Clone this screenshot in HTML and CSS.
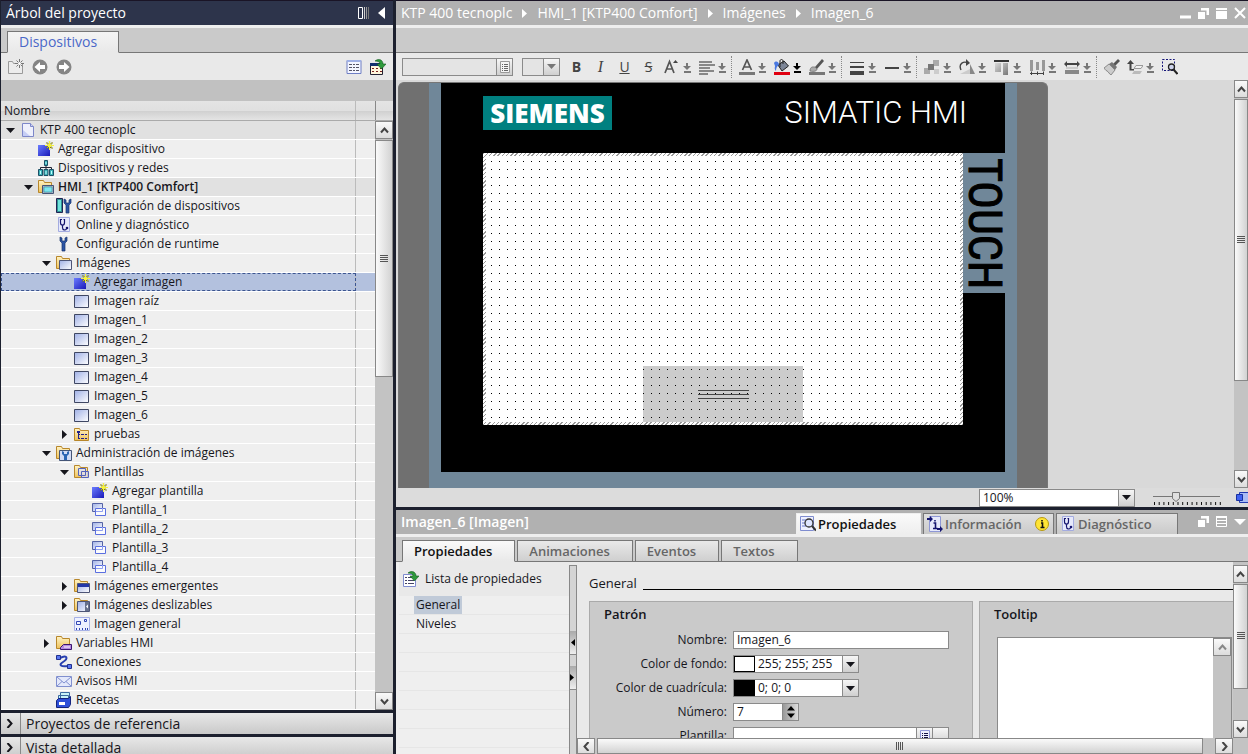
FILE: index.html
```html
<!DOCTYPE html>
<html lang="es">
<head>
<meta charset="utf-8">
<title>KTP 400 tecnoplc</title>
<link rel="stylesheet" href="styles.css">
</head>
<body>
<svg class="defs" aria-hidden="true">
  <defs>
    <linearGradient id="g-sky" x1="0" y1="0" x2="1" y2="1"><stop offset="0" stop-color="#9fb0e6"/><stop offset="1" stop-color="#fff"/></linearGradient>
    <linearGradient id="g-blue" x1="0" y1="0" x2="1" y2="1"><stop offset="0" stop-color="#6a7cff"/><stop offset="1" stop-color="#1a1ab8"/></linearGradient>
    <linearGradient id="g-gold" x1="0" y1="0" x2="0" y2="1"><stop offset="0" stop-color="#fff3c4"/><stop offset="1" stop-color="#eec25c"/></linearGradient>
    <linearGradient id="g-grey" x1="0" y1="0" x2="1" y2="1"><stop offset="0" stop-color="#d8d8d8"/><stop offset="1" stop-color="#777"/></linearGradient>
    <symbol id="i-project" viewBox="0 0 16 16"><path d="M2.500 1.500h8l3 3v10h-11z" fill="#eef0fc" stroke="#7d87c9"/><path d="M10.500 1.500v3h3" fill="#cdd3f5" stroke="#7d87c9"/><path d="M3 14V8l7 6z" fill="#c5cdf5"/></symbol>
    <symbol id="i-add" viewBox="0 0 16 16"><path d="M0 4h12v11H0z" fill="url(#g-blue)"/><path d="M11.500 0v9M7 4.500h9M8.500 1.500l6 6M14.500 1.500l-6 6" stroke="#77771c" stroke-width="1.200"/><path d="M11.500 0v9M7 4.500h9" stroke="#f6f23c"/><path d="M9.500 2.500l4 4M13.500 2.500l-4 4" stroke="#f6f23c"/></symbol>
    <symbol id="i-net" viewBox="0 0 16 16"><path d="M8 5v5M2.500 10V7.500h11V10" fill="none" stroke="#223"/><path d="M6.500.500h3v5h-3zM.500 9.500h4v6h-4zM6 9.500h4v6H6zM11.500 9.500h4v6h-4z" fill="#3fb3b8" stroke="#1c4f66"/><path d="M2 11h1v3H2zM7.500 11h1v3h-1zM13 11h1v3h-1zM7.500 2h1v2h-1z" fill="#bff"/></symbol>
    <symbol id="i-folder" viewBox="0 0 16 16"><path d="M.500 13.500v-12h5l1 2h7v10z" fill="url(#g-gold)" stroke="#b8872b"/></symbol>
    <symbol id="i-hmi" viewBox="0 0 16 16"><use href="#i-folder"/><path d="M4.500 6.500h11v8h-11z" fill="#a9b3c4" stroke="#445577"/><path d="M6 8h8v5H6z" fill="#7fe6ee" stroke="#2b8d9b" stroke-width=".6"/></symbol>
    <symbol id="i-devcfg" viewBox="0 0 16 16"><path d="M.500.500h6v14h-6z" fill="#2f8f90" stroke="#225"/><path d="M2 2h3v11H2z" fill="#6fe3dd"/><path d="M8 1v4l2 2v8h3V7l2-2V1l-2 1v3h-3V2z" fill="#2c55a4" stroke="#18346f" stroke-width=".7"/></symbol>
    <symbol id="i-wr" viewBox="0 0 16 16"><path d="M4 1v4l2 2v8h3V7l2-2V1L9 2v3H6V2z" fill="#2c55a4" stroke="#18346f" stroke-width=".7"/></symbol>
    <symbol id="i-diag" viewBox="0 0 16 16"><path d="M2.500 .500h11v14h-11z" fill="#e6e9fb" stroke="#a3abe0"/><path d="M6 2.500H4.500v3c0 3.500 4 3.500 4 0v-3H7.500M6.500 8v2.500c0 3 3 3 4 1.500" fill="none" stroke="#14146e" stroke-width="1.200"/><circle cx="11" cy="11" r="1.300" fill="#14146e"/></symbol>
    <symbol id="i-images" viewBox="0 0 16 16"><use href="#i-folder"/><path d="M3.500 5.500h12v9h-12z" fill="url(#g-sky)" stroke="#4d5577"/></symbol>
    <symbol id="i-image" viewBox="0 0 16 16"><path d="M.500 2.500h14v12H.500z" fill="url(#g-sky)" stroke="#3f4763"/></symbol>
    <symbol id="i-group" viewBox="0 0 16 16"><path d="M.500 14.500v-12h5l1 2h8v10z" fill="url(#g-gold)" stroke="#b8872b"/><path d="M3 5h3v2H3zM7 8h3v1H7zM11 8h2v1h-2zM7 12h3v1H7zM11 12h2v1h-2zM4 7h1v6H4zM4 12h2v1H4zM4 8h2v1H4z" fill="#20208c"/></symbol>
    <symbol id="i-adm" viewBox="0 0 16 16"><use href="#i-folder"/><path d="M3.500 5.500h12v10h-12z" fill="#d3dbf5" stroke="#445577"/><path d="M6 6v3l2 2v4h3v-4l2-2V6l-2 1v2H8V7z" fill="#2c65b4"/></symbol>
    <symbol id="i-tplf" viewBox="0 0 16 16"><use href="#i-folder"/><path d="M4.500 4.500h7v7h-7zM7.500 7.500h7v6h-7z" fill="#dde3ff" fill-opacity=".7" stroke="#5563bb"/></symbol>
    <symbol id="i-tpl" viewBox="0 0 16 16"><path d="M.500 1.500h10v8H.500z" fill="url(#g-sky)" stroke="#5563a5"/><path d="M3.500 6.500h10v7h-10z" fill="#fff" fill-opacity=".8" stroke="#5b6fe0"/><path d="M4 9.500h6.500V6" fill="none" stroke="#8fa0f0"/></symbol>
    <symbol id="i-popup" viewBox="0 0 16 16"><use href="#i-folder"/><path d="M3.500 5.500h12v9h-12z" fill="url(#g-sky)" stroke="#4d5577"/><path d="M4 6h11v3H4z" fill="#2337a8"/></symbol>
    <symbol id="i-slide" viewBox="0 0 16 16"><use href="#i-folder"/><path d="M3.500 4.500h12v10h-12z" fill="url(#g-sky)" stroke="#4d5577"/><path d="M11 5h4v9h-4z" fill="#66708c"/><path d="M14 7.500v4l-2-2z" fill="#fff"/></symbol>
    <symbol id="i-global" viewBox="0 0 16 16"><path d="M.500 1.500h15v13H.500z" fill="#eef1ff" stroke="#a6b1e6"/><path d="M2.500 5.500h4v3h-4zM10.500 3.500h2v2h-2z" fill="none" stroke="#3348b5"/><path d="M2 12h1v2H2zM5 12h1v2H5zM8 12h1v2H8zM11 12h1v2h-1zM13 12h1v2h-1z" fill="#3348b5"/></symbol>
    <symbol id="i-vars" viewBox="0 0 16 16"><use href="#i-folder"/><path d="M7.500 9.500h8v5h-11v-2z" fill="#b58ae0" stroke="#3a1670"/><path d="M8 12h6" stroke="#fff"/></symbol>
    <symbol id="i-conn" viewBox="0 0 16 16"><path d="M4 4c8-4 8 1 3 4s-2 5 5 4" fill="none" stroke="#2840b0" stroke-width="2"/><path d="M.500 1.500h4v4h-4zM11.500 10.500h4v4h-4z" fill="#5a78f0" stroke="#203090"/></symbol>
    <symbol id="i-mail" viewBox="0 0 16 16"><path d="M.500 3.500h15v10H.500z" fill="#e4e9fb" stroke="#8190cf"/><path d="M1 4l7 6 7-6M1 13l5-4.500M15 13l-5-4.500" fill="none" stroke="#8190cf"/></symbol>
    <symbol id="i-rec" viewBox="0 0 16 16"><path d="M4.500.500h9v6h-9zM2.500 3.500h10v6h-10z" fill="#c8f2f7" stroke="#3b6aa0"/><path d="M.500 8.500l2-2h10l2-2v8l-2 3H.500z" fill="#2d4fd8" stroke="#14247e"/><path d="M3 10h6v3H3z" fill="#fff"/></symbol>
    <symbol id="i-newf" viewBox="0 0 16 16"><path d="M.500 14.500v-12h4l1 2h9v10z" fill="#ececec" stroke="#9a9a9a"/><path d="M11.500 0v9M7 4.500h9M8.500 1.500l6 6M14.500 1.500l-6 6" stroke="#777"/><circle cx="11.500" cy="4.500" r="1.500" fill="#fff"/></symbol>
    <symbol id="i-back" viewBox="0 0 16 16"><circle cx="8" cy="8" r="7.500" fill="#858585"/><path d="M2.500 8L8 3v3h5v4H8v3z" fill="#fff"/></symbol>
    <symbol id="i-fwd" viewBox="0 0 16 16"><circle cx="8" cy="8" r="7.500" fill="#858585"/><path d="M13.500 8L8 3v3H3v4h5v3z" fill="#fff"/></symbol>
    <symbol id="i-grid" viewBox="0 0 16 16"><path d="M1 1.500h14v13H1z" fill="#f3f5ff" stroke="#6f7fc4"/><path d="M3 5.500h3M7 5.500h2M10 5.500h3M3 8.500h3M7 8.500h2M10 8.500h3M3 11.500h3M7 11.500h2M10 11.500h3" stroke="#556"/><path d="M1 2h14" stroke="#9fb0e6" stroke-width="2"/></symbol>
    <symbol id="i-gridgo" viewBox="0 0 16 16"><path d="M.500 4.500h12v11H.500z" fill="#fff6dc" stroke="#223"/><path d="M0 4h13v3H0z" fill="#14306e"/><path d="M2 9h2v1H2zM6 9h2v1H6zM10 9h2v1h-2zM2 12h2v1H2zM6 12h2v1H6zM10 12h2v1h-2z" fill="#7a2020"/><path d="M5 2c4-3 8-1 8 3h3l-4.500 5L7 5h3c0-2-2-3-5-3z" fill="#2f9a3c" stroke="#145a1e" stroke-width=".6"/></symbol>
    <symbol id="i-list" viewBox="0 0 16 16"><path d="M.500 3.500h12v12H.500z" fill="#fff" stroke="#7f8ccf"/><path d="M2 6.500h2M5 6.500h6M2 9.500h2M5 9.500h6M2 12.500h2M5 12.500h6" stroke="#446"/><path d="M5 2c4-3 8-1 8 3h3l-4.500 5L7 5h3c0-2-2-3-5-3z" fill="#2f9a3c" stroke="#145a1e" stroke-width=".6"/></symbol>
    <symbol id="i-prop" viewBox="0 0 16 16"><path d="M.500.500h13v14H.500z" fill="#eef0ff" stroke="#7f8ccf"/><path d="M2 4h4M2 7h3M2 10h4" stroke="#6677cc"/><circle cx="9" cy="7" r="4" fill="#dfe6ff" stroke="#333" stroke-width="1.300"/><path d="M12 10l4 4.500" stroke="#333" stroke-width="2"/></symbol>
    <symbol id="i-info" viewBox="0 0 16 16"><path d="M2.500.500h11v15h-11z" fill="#e6e9fb" stroke="#8e97d6"/><path d="M0 2h3V0l3 3-3 3V4H0zM10 12h3v-2l3 3-3 3v-2h-3z" fill="#14146e"/><path d="M6.500 7h2v5M6 12.500h4.500M8 4v1.500" fill="none" stroke="#14146e" stroke-width="1.600"/></symbol>
    <symbol id="i-badge" viewBox="0 0 16 16"><circle cx="8" cy="8" r="6.500" fill="#ffe436" stroke="#b89a10"/><path d="M7 7h1.500v4.500M6.500 11.500h4M8 4v1.500" fill="none" stroke="#111" stroke-width="1.600"/></symbol>
    <symbol id="i-dl" viewBox="0 0 9 16"><path d="M3 4h2v3h3L4 11 0 7h3zM1 12h7v2H1z" fill="currentColor"/></symbol>
    <symbol id="i-up" viewBox="0 0 9 9"><path d="M1 6.500l3.500-4 3.500 4" fill="none" stroke="currentColor" stroke-width="2"/></symbol>
    <symbol id="i-down" viewBox="0 0 9 9"><path d="M1 2.500l3.500 4 3.500-4" fill="none" stroke="currentColor" stroke-width="2"/></symbol>
    <symbol id="i-left" viewBox="0 0 9 9"><path d="M6.500 0l-4 4.500 4 4.500" fill="none" stroke="currentColor" stroke-width="2"/></symbol>
    <symbol id="i-right" viewBox="0 0 9 9"><path d="M2.500 0l4 4.500-4 4.500" fill="none" stroke="currentColor" stroke-width="2"/></symbol>
    <symbol id="i-tri" viewBox="0 0 9 9"><path d="M0 2h9L4.500 7z" fill="currentColor"/></symbol>
    <symbol id="i-trir" viewBox="0 0 9 9"><path d="M2 0v9l5-4.500z" fill="currentColor"/></symbol>
  </defs>
</svg>
<div class="app">
  <aside class="side">
    <header class="side-title"><h1 class="title">Árbol del proyecto</h1>
      <button class="bare" aria-label="Columnas"><svg width="12" height="12" viewBox="0 0 12 12"><path d="M.5.500h4v11h-4z" fill="none" stroke="#fff"/><path d="M6.500 0v12" stroke="#ccc"/><path d="M8.500 0v12" stroke="#999"/><path d="M10.500 0v12" stroke="#777"/></svg></button>
      <button class="bare" aria-label="Contraer"><svg width="8" height="12" viewBox="0 0 8 12"><path d="M7 0v12L0 6z" fill="#fff"/></svg></button>
    </header>
    <div class="strip side-strip"><button class="tab tab-blue">Dispositivos</button></div>
    <div class="side-tools">
      <button class="bare" aria-label="Nuevo"><svg class="ic"><use href="#i-newf"/></svg></button>
      <button class="bare" aria-label="Atrás"><svg class="ic"><use href="#i-back"/></svg></button>
      <button class="bare" aria-label="Adelante"><svg class="ic"><use href="#i-fwd"/></svg></button>
      <span class="grow"></span>
      <button class="bare" aria-label="Lista"><svg class="ic"><use href="#i-grid"/></svg></button>
      <button class="bare" aria-label="Abrir lista"><svg class="ic"><use href="#i-gridgo"/></svg></button>
    </div>
    <div class="side-gap"></div>
    <div class="tree-head"><span class="grow">Nombre</span><span class="c2"></span><span class="c3"></span></div>
    <div class="tree-wrap">
      <ul class="tree">
        <li class="row l0 dim"><span class="tw"><svg class="ar"><use href="#i-tri"/></svg></span><svg class="ic"><use href="#i-project"/></svg><span class="tx">KTP 400 tecnoplc</span><span class="c2"></span></li>
        <li class="row l1"><span class="tw"></span><svg class="ic"><use href="#i-add"/></svg><span class="tx">Agregar dispositivo</span><span class="c2"></span></li>
        <li class="row l1"><span class="tw"></span><svg class="ic"><use href="#i-net"/></svg><span class="tx">Dispositivos y redes</span><span class="c2"></span></li>
        <li class="row l1 dim strong"><span class="tw"><svg class="ar"><use href="#i-tri"/></svg></span><svg class="ic"><use href="#i-hmi"/></svg><span class="tx">HMI_1 [KTP400 Comfort]</span><span class="c2"></span></li>
        <li class="row l2"><span class="tw"></span><svg class="ic"><use href="#i-devcfg"/></svg><span class="tx">Configuración de dispositivos</span><span class="c2"></span></li>
        <li class="row l2"><span class="tw"></span><svg class="ic"><use href="#i-diag"/></svg><span class="tx">Online y diagnóstico</span><span class="c2"></span></li>
        <li class="row l2"><span class="tw"></span><svg class="ic"><use href="#i-wr"/></svg><span class="tx">Configuración de runtime</span><span class="c2"></span></li>
        <li class="row l2"><span class="tw"><svg class="ar"><use href="#i-tri"/></svg></span><svg class="ic"><use href="#i-images"/></svg><span class="tx">Imágenes</span><span class="c2"></span></li>
        <li class="row l3 sel"><span class="tw"></span><svg class="ic"><use href="#i-add"/></svg><span class="tx">Agregar imagen</span><span class="c2"></span></li>
        <li class="row l3"><span class="tw"></span><svg class="ic"><use href="#i-image"/></svg><span class="tx">Imagen raíz</span><span class="c2"></span></li>
        <li class="row l3"><span class="tw"></span><svg class="ic"><use href="#i-image"/></svg><span class="tx">Imagen_1</span><span class="c2"></span></li>
        <li class="row l3"><span class="tw"></span><svg class="ic"><use href="#i-image"/></svg><span class="tx">Imagen_2</span><span class="c2"></span></li>
        <li class="row l3"><span class="tw"></span><svg class="ic"><use href="#i-image"/></svg><span class="tx">Imagen_3</span><span class="c2"></span></li>
        <li class="row l3"><span class="tw"></span><svg class="ic"><use href="#i-image"/></svg><span class="tx">Imagen_4</span><span class="c2"></span></li>
        <li class="row l3"><span class="tw"></span><svg class="ic"><use href="#i-image"/></svg><span class="tx">Imagen_5</span><span class="c2"></span></li>
        <li class="row l3"><span class="tw"></span><svg class="ic"><use href="#i-image"/></svg><span class="tx">Imagen_6</span><span class="c2"></span></li>
        <li class="row l3"><span class="tw"><svg class="ar"><use href="#i-trir"/></svg></span><svg class="ic"><use href="#i-group"/></svg><span class="tx">pruebas</span><span class="c2"></span></li>
        <li class="row l2"><span class="tw"><svg class="ar"><use href="#i-tri"/></svg></span><svg class="ic"><use href="#i-adm"/></svg><span class="tx">Administración de imágenes</span><span class="c2"></span></li>
        <li class="row l3"><span class="tw"><svg class="ar"><use href="#i-tri"/></svg></span><svg class="ic"><use href="#i-tplf"/></svg><span class="tx">Plantillas</span><span class="c2"></span></li>
        <li class="row l4"><span class="tw"></span><svg class="ic"><use href="#i-add"/></svg><span class="tx">Agregar plantilla</span><span class="c2"></span></li>
        <li class="row l4"><span class="tw"></span><svg class="ic"><use href="#i-tpl"/></svg><span class="tx">Plantilla_1</span><span class="c2"></span></li>
        <li class="row l4"><span class="tw"></span><svg class="ic"><use href="#i-tpl"/></svg><span class="tx">Plantilla_2</span><span class="c2"></span></li>
        <li class="row l4"><span class="tw"></span><svg class="ic"><use href="#i-tpl"/></svg><span class="tx">Plantilla_3</span><span class="c2"></span></li>
        <li class="row l4"><span class="tw"></span><svg class="ic"><use href="#i-tpl"/></svg><span class="tx">Plantilla_4</span><span class="c2"></span></li>
        <li class="row l3"><span class="tw"><svg class="ar"><use href="#i-trir"/></svg></span><svg class="ic"><use href="#i-popup"/></svg><span class="tx">Imágenes emergentes</span><span class="c2"></span></li>
        <li class="row l3"><span class="tw"><svg class="ar"><use href="#i-trir"/></svg></span><svg class="ic"><use href="#i-slide"/></svg><span class="tx">Imágenes deslizables</span><span class="c2"></span></li>
        <li class="row l3"><span class="tw"></span><svg class="ic"><use href="#i-global"/></svg><span class="tx">Imagen general</span><span class="c2"></span></li>
        <li class="row l2"><span class="tw"><svg class="ar"><use href="#i-trir"/></svg></span><svg class="ic"><use href="#i-vars"/></svg><span class="tx">Variables HMI</span><span class="c2"></span></li>
        <li class="row l2"><span class="tw"></span><svg class="ic"><use href="#i-conn"/></svg><span class="tx">Conexiones</span><span class="c2"></span></li>
        <li class="row l2"><span class="tw"></span><svg class="ic"><use href="#i-mail"/></svg><span class="tx">Avisos HMI</span><span class="c2"></span></li>
        <li class="row l2"><span class="tw"></span><svg class="ic"><use href="#i-rec"/></svg><span class="tx">Recetas</span><span class="c2"></span></li>
      </ul>
      <div class="sb sb-tree"><button class="sbb" aria-label="Subir"><svg class="ar"><use href="#i-up"/></svg></button><div class="track"><div class="thumb"><i class="grip"></i></div></div><button class="sbb" aria-label="Bajar"><svg class="ar"><use href="#i-down"/></svg></button></div>
    </div>
    <button class="fold"><span class="fold-ar"><svg class="ar"><use href="#i-right"/></svg></span>Proyectos de referencia</button>
    <button class="fold"><span class="fold-ar"><svg class="ar"><use href="#i-right"/></svg></span>Vista detallada</button>
  </aside>

  <main class="work">
    <header class="crumbs">
      <nav class="crumb-list"><a href="#">KTP 400 tecnoplc</a><svg class="ar"><use href="#i-trir"/></svg><a href="#">HMI_1 [KTP400 Comfort]</a><svg class="ar"><use href="#i-trir"/></svg><a href="#">Imágenes</a><svg class="ar"><use href="#i-trir"/></svg><a href="#">Imagen_6</a></nav>
      <div class="wins">
        <button class="bare" aria-label="Minimizar"><svg width="12" height="12" viewBox="0 0 12 12"><path d="M0 8.500h11v3H0z" fill="#fff"/></svg></button>
        <button class="bare" aria-label="Desacoplar"><svg width="12" height="12" viewBox="0 0 12 12"><path d="M0 5h7v7H0z" fill="#fff"/><path d="M3 1h8v7H8.500V3.500H3z" fill="#fff"/></svg></button>
        <button class="bare" aria-label="Maximizar"><svg width="12" height="12" viewBox="0 0 12 12"><path d="M0 1h11v2H0zM0 4h11v8H0z" fill="#fff"/></svg></button>
        <button class="bare" aria-label="Cerrar"><svg width="12" height="12" viewBox="0 0 12 12"><path d="M1 1l10 10M11 1L1 11" stroke="#fff" stroke-width="2"/></svg></button>
      </div>
    </header>
    <div class="strip"></div>
    <div class="tools">
      <div class="combo font-combo"><input class="cin" type="text" aria-label="Fuente"><button class="cbtn" aria-label="Elegir fuente"><svg width="10" height="12" viewBox="0 0 10 12"><path d="M.5.500h9v11h-9z" fill="#f4f4f4" stroke="#999"/><path d="M2 3.500h1M4 3.500h4M2 5.500h1M4 5.500h4M2 7.500h1M4 7.500h4M2 9.500h1M4 9.500h4" stroke="#666"/></svg></button></div>
      <div class="combo size-combo"><input class="cin" type="text" aria-label="Tamaño"><button class="cbtn cbtn-grey" aria-label="Elegir tamaño"><svg class="ar"><use href="#i-tri"/></svg></button></div>
      <button class="lt"><b>B</b></button>
      <button class="lt"><i>I</i></button>
      <button class="lt"><u>U</u></button>
      <button class="lt"><s>S</s></button>
      <button class="tool" aria-label="Tamaño de letra"><svg class="ic" viewBox="0 0 16 16"><path d="M1 14L5.500 2.500 10 14M2.500 10h6" fill="none" stroke="#555" stroke-width="1.700"/><path d="M9 4h5l-2.500-3z" fill="#444"/></svg><svg class="dl"><use href="#i-dl"/></svg></button>
      <button class="tool" aria-label="Alinear texto"><svg class="ic" viewBox="0 0 16 16"><path d="M0 2h13v2H0zM0 5h16v2H0zM0 8h11v2H0zM0 11h15v2H0zM0 14h9v2H0z" fill="#888"/></svg><svg class="dl"><use href="#i-dl"/></svg></button>
      <i class="sep"></i>
      <button class="tool" aria-label="Color de texto"><svg class="ic" viewBox="0 0 16 16"><path d="M3.500 11L8 1l4.500 10M5 8h6" fill="none" stroke="#555" stroke-width="1.700"/><path d="M0 13h16v3H0z" fill="#777"/></svg><svg class="dl"><use href="#i-dl"/></svg></button>
      <button class="tool on" aria-label="Color de fondo"><svg class="ic" viewBox="0 0 16 16"><path d="M4 6l6-4 4.500 5L8 12z" fill="#7d8697" stroke="#222"/><path d="M6 8V2c0-2 3-2 3 0v3" fill="none" stroke="#222"/><path d="M0 4c2-3 5-1 5 2-2 1-3 3-3 6-2-2-1-4-1-5z" fill="#4a78e0"/><path d="M0 13h16v3H0z" fill="#e00010"/></svg><svg class="dl"><use href="#i-dl"/></svg></button>
      <button class="tool" aria-label="Color de línea"><svg class="ic" viewBox="0 0 16 16"><path d="M6 8l7-8 2 2-7 8z" fill="#555"/><path d="M1 11c1-4 3-3 5-3l2 2c0 2-3 3-7 2z" fill="#aaa" stroke="#666" stroke-width=".7"/><path d="M0 13h16v3H0z" fill="#777"/></svg><svg class="dl"><use href="#i-dl"/></svg></button>
      <i class="sep"></i>
      <button class="tool" aria-label="Grosor"><svg class="ic" viewBox="0 0 16 16"><path d="M1 3h14v1H1zM1 7h14v2H1zM1 12h14v4H1z" fill="#444"/></svg><svg class="dl"><use href="#i-dl"/></svg></button>
      <button class="tool" aria-label="Estilo de línea"><svg class="ic" viewBox="0 0 16 16"><path d="M1 8h14v2H1z" fill="#444"/></svg><svg class="dl"><use href="#i-dl"/></svg></button>
      <i class="sep"></i>
      <button class="tool" aria-label="Agrupar"><svg class="ic" viewBox="0 0 16 16"><path d="M9 1h6v6H9zM0 9h6v6H0z" fill="#aaa"/><path d="M4 5h6v6H4z" fill="#777"/><path d="M10 10h5v5h-5z" fill="#ccc"/></svg><svg class="dl"><use href="#i-dl"/></svg></button>
      <button class="tool" aria-label="Girar"><svg class="ic" viewBox="0 0 16 16"><path d="M2 11C-1 4 5 2 9 4" fill="none" stroke="#444" stroke-width="1.400"/><path d="M7 0l4 4-4 3z" fill="#444"/><path d="M11 5l5 10h-5z" fill="#888"/><path d="M1 15l10-5v5z" fill="#ccc"/></svg><svg class="dl"><use href="#i-dl"/></svg></button>
      <button class="tool" aria-label="Alinear arriba"><svg class="ic" viewBox="0 0 16 16"><path d="M0 1h15v2H0z" fill="#333"/><path d="M1 4h6v9H1zM9 4h5v12H9z" fill="url(#g-grey)"/></svg><svg class="dl"><use href="#i-dl"/></svg></button>
      <button class="tool" aria-label="Distribuir"><svg class="ic" viewBox="0 0 16 16"><path d="M1 1h3v11H1zM7 3h3v8H7zM13 1h3v11h-3z" fill="#999"/><path d="M1 14.500h14M2.500 12.500v4M8.500 12.500v4M14.500 12.500v4" stroke="#444"/></svg><svg class="dl"><use href="#i-dl"/></svg></button>
      <button class="tool" aria-label="Igualar ancho"><svg class="ic" viewBox="0 0 16 16"><path d="M0 5l3-3v2h10V2l3 3-3 3V6H3v2z" fill="#444"/><path d="M2 8h12v2H2z" fill="#ccc"/><path d="M1 11h14v4H1z" fill="#888"/></svg><svg class="dl"><use href="#i-dl"/></svg></button>
      <i class="sep"></i>
      <button class="bare" aria-label="Copiar formato"><svg class="ic" viewBox="0 0 16 16"><path d="M9 5l5-5 2 2-5 5z" fill="#555"/><path d="M5 5l3-2 5 5-2 3z" fill="#777"/><path d="M0 9l5-4 6 6-4 5c-2-1-2-3-4-4S1 10 0 9z" fill="#ccc" stroke="#777" stroke-width=".8"/></svg></button>
      <button class="tool" aria-label="Orden"><svg class="ic" viewBox="0 0 16 16"><path d="M2.500 11V5H0l3.500-4L7 5H4.500v5H7v1.500H2.500z" fill="#444"/><path d="M7 9.500l2-3h7l-2 3z" fill="#f2f2f2" stroke="#999"/><path d="M5 15l2-3h8l-2 3z" fill="#bbb"/></svg><svg class="dl"><use href="#i-dl"/></svg></button>
      <button class="bare" aria-label="Zoom a selección"><svg class="ic" viewBox="0 0 16 16"><path d="M.500 .500h12v11H.500z" fill="none" stroke="#16167a" stroke-dasharray="2 1.500"/><circle cx="9.500" cy="8" r="3" fill="#cfd4ee" stroke="#222" stroke-width="1.300"/><path d="M11.500 10.500l4 4.500" stroke="#222" stroke-width="2"/></svg></button>
    </div>

    <section class="editor">
      <div class="canvas">
        <div class="device">
          <div class="frame">
            <div class="panel">
              <div class="brand"><span class="logo">SIEMENS</span><span class="model">SIMATIC HMI</span></div>
              <div class="screen"><div class="grid"><div class="slide"><i class="bars"></i></div></div></div>
              <div class="touch">TOUCH</div>
            </div>
          </div>
        </div>
      </div>
      <div class="sb sb-canvas"><button class="sbb" aria-label="Subir"><svg class="ar"><use href="#i-up"/></svg></button><div class="track"><div class="thumb"><i class="grip"></i></div></div><button class="sbb" aria-label="Bajar"><svg class="ar"><use href="#i-down"/></svg></button></div>
    </section>
    <div class="zoombar">
      <div class="combo zoom-combo"><input class="cin" type="text" value="100%" aria-label="Zoom"><button class="cbtn" aria-label="Elegir zoom"><svg class="ar"><use href="#i-tri"/></svg></button></div>
      <svg class="ruler" width="68" height="16" viewBox="0 0 68 16" role="img" aria-label="Nivel de zoom"><path d="M0 6.500h67" stroke="#777"/><path d="M1 13.500h67" stroke="#111" stroke-width="3" stroke-dasharray="1 3.700"/><path d="M19.500 2.500h7v6l-3.500 3-3.500-3z" fill="#e0e0e0" stroke="#777"/></svg>
      <button class="bare view" aria-label="Vista general"><svg width="12" height="14" viewBox="0 0 12 14"><path d="M3.500 1.500h9v10h-9z" fill="#a9bcf5" stroke="#2038b0"/><path d="M.500 3.500h6v6h-6z" fill="#3f62f0" stroke="#1830a0"/></svg></button>
    </div>

    <section class="insp">
      <header class="insp-head">
        <h2 class="title grow">Imagen_6 [Imagen]</h2>
        <button class="htab on"><svg class="ic"><use href="#i-prop"/></svg>Propiedades</button>
        <button class="htab"><svg class="ic"><use href="#i-info"/></svg>Información<span class="grow"></span><svg class="ic"><use href="#i-badge"/></svg></button>
        <button class="htab"><svg class="ic"><use href="#i-diag"/></svg>Diagnóstico</button>
        <div class="insp-wins">
          <button class="bare" aria-label="Desacoplar"><svg width="12" height="12" viewBox="0 0 12 12"><path d="M0 4h7v7H0z" fill="#fff"/><path d="M3 0h8v7H8.500V2.500H3z" fill="#fff"/></svg></button>
          <button class="bare" aria-label="Distribuir"><svg width="12" height="12" viewBox="0 0 12 12"><path d="M.500 1h10v9.500H.500zM1 4.500h10M1 7.500h10" fill="none" stroke="#fff"/><path d="M0 0h11v2H0z" fill="#fff"/></svg></button>
          <button class="bare" aria-label="Contraer"><svg width="12" height="12" viewBox="0 0 12 12"><path d="M0 3h12L6 9z" fill="#fff"/></svg></button>
        </div>
      </header>
      <div class="strip ptabs"><button class="tab tab-on">Propiedades</button><button class="tab">Animaciones</button><button class="tab">Eventos</button><button class="tab">Textos</button></div>
      <div class="insp-body">
        <nav class="plist">
          <button class="plist-head"><svg class="ic"><use href="#i-list"/></svg>Lista de propiedades</button>
          <ul class="plist-items"><li><a class="cur" href="#">General</a></li><li><a href="#">Niveles</a></li></ul>
        </nav>
        <div class="split"><button class="sp" aria-label="Contraer lista"><svg width="5" height="7" viewBox="0 0 5 7"><path d="M5 0v7L1 3.500z"/></svg></button><button class="sp" aria-label="Expandir lista"><svg width="5" height="7" viewBox="0 0 5 7"><path d="M0 0v7l4-3.500z"/></svg></button></div>
        <div class="form-col">
          <div class="form-view">
            <h3 class="sec">General</h3>
            <div class="cards">
              <form class="card pattern">
                <h4 class="card-t">Patrón</h4>
                <div class="f"><label for="n">Nombre:</label><input class="in wide" id="n" type="text" value="Imagen_6"></div>
                <div class="f"><label for="cf">Color de fondo:</label><div class="combo color"><i class="sw"></i><input class="cin" id="cf" type="text" value="255; 255; 255"><button type="button" class="cbtn" aria-label="Elegir color de fondo"><svg class="ar"><use href="#i-tri"/></svg></button></div></div>
                <div class="f"><label for="cc">Color de cuadrícula:</label><div class="combo color"><i class="sw sw-k"></i><input class="cin" id="cc" type="text" value="0; 0; 0"><button type="button" class="cbtn" aria-label="Elegir color de cuadrícula"><svg class="ar"><use href="#i-tri"/></svg></button></div></div>
                <div class="f"><label for="nu">Número:</label><div class="combo num"><input class="cin" id="nu" type="text" value="7"><button type="button" class="cbtn spin" aria-label="Cambiar número"><svg width="10" height="14" viewBox="0 0 10 14"><path d="M1 5.500L5 1l4 4.500zM1 8.500h8L5 13z"/></svg></button></div></div>
                <div class="f"><label for="pl">Plantilla:</label><div class="combo wide"><input class="cin" id="pl" type="text"><button type="button" class="cbtn" aria-label="Elegir plantilla"><svg width="10" height="12" viewBox="0 0 10 12"><path d="M.500.500h9v11h-9z" fill="#eef0ff" stroke="#8e97d6"/><path d="M2 3.500h1M4 3.500h4M2 5.500h1M4 5.500h4M2 7.500h1M4 7.500h4" stroke="#114"/></svg></button><button type="button" class="cbtn" aria-label="Abrir plantilla"></button></div></div>
              </form>
              <div class="card tip">
                <label class="card-t" for="tt">Tooltip</label>
                <div class="tipbox"><textarea class="ta" id="tt"></textarea><div class="tipbar"><button class="sbb" aria-label="Subir texto"><svg class="ar"><use href="#i-up"/></svg></button></div></div>
              </div>
            </div>
          </div>
          <div class="sb sb-h"><button class="sbb" aria-label="Izquierda"><svg class="ar"><use href="#i-left"/></svg></button><div class="track"><div class="thumb"><i class="grip"></i></div></div><button class="sbb" aria-label="Derecha"><svg class="ar"><use href="#i-right"/></svg></button></div>
        </div>
        <div class="sb sb-form"><button class="sbb" aria-label="Subir"><svg class="ar"><use href="#i-up"/></svg></button><div class="track"><div class="thumb"><i class="grip"></i></div></div><button class="sbb" aria-label="Bajar"><svg class="ar"><use href="#i-down"/></svg></button></div>
      </div>
    </section>
  </main>
</div>
</body>
</html>
```
FILE: styles.css
```css
* { box-sizing: border-box; }
body { margin: 0; font: 12px/18px "Open Sans", "Noto Sans", sans-serif; color: #16161c; }
button, input, textarea { font: inherit; color: inherit; margin: 0; padding: 0; border: 0; border-radius: 0; background: none; }
button { flex: none; }
ul { list-style: none; margin: 0; padding: 0; }
h1, h2, h3, h4, form { margin: 0; }
a { color: inherit; text-decoration: none; }
svg { display: block; flex: none; }
.defs { position: absolute; width: 0; height: 0; }
.ic { width: 16px; height: 16px; }
.ar { width: 9px; height: 9px; }
.grow { flex: 1; }
.title { font-size: 14px; font-weight: 500; color: #fff; }
.bare { display: flex; align-items: center; justify-content: center; }

.app { display: grid; grid-template-columns: 393px minmax(0, 1fr); gap: 3px; height: 100vh; overflow: hidden; background: #1c202e; }

/* project tree */
.side { display: flex; flex-direction: column; min-height: 0; margin-bottom: -4px; padding-left: 1px; }
.side-title { display: flex; align-items: center; gap: 8px; flex: none; height: 25px; padding: 0 7px 0 5px; background: #2d344b; border-top: 1px solid #1a1426; }
.side-title .title { flex: 1; }
.strip { display: flex; align-items: flex-end; flex: none; height: 28px; padding-left: 6px; background: #cacaca; border-top: 3px solid #eee; border-bottom: 1px solid #777; }
.tab { height: 22px; margin-bottom: -1px; padding: 0 22px 0 11px; border: 1px solid #777; background: linear-gradient(#e9e9e9, #cfcfcf); font-size: 13px; font-weight: 600; line-height: 18px; color: #666; text-align: left; }
.tab-blue { width: 112px; font-size: 14px; font-weight: 500; color: #4a68c8; background: linear-gradient(#f4f4f4, #e9e9e9); border-bottom-color: #e9e9e9; }
.side-tools { display: flex; align-items: center; gap: 8px; flex: none; height: 27px; padding: 0 7px; background: #e9e9e9; }
.side-gap { flex: none; height: 21px; background: #c1c1c1; }
.tree-head { display: flex; flex: none; height: 20px; background: linear-gradient(#e4e4e4, #e0e0e0 50%, #cfcfcf 50%, #e4e4e4); border-bottom: 1px solid #aaa; padding-left: 3px; line-height: 20px; }
.c2 { flex: none; width: 20px; align-self: stretch; border-left: 1px solid #bbb; }
.c3 { flex: none; width: 18px; border-left: 1px solid #888; }
.tree-wrap { display: flex; flex: 1; min-height: 0; background: #efefef; }
.tree { flex: 1; overflow: hidden; }
.row { display: flex; align-items: center; height: 19px; border-bottom: 1px solid #fff; background: #efefef; }
.row.dim { background: #e1e1e1; }
.row.strong { font-weight: 600; }
.row.sel { position: relative; background: #b3c1de; }
.row.sel::after { content: ""; position: absolute; inset: 0 19px 0 0; border: 1px dashed #3c5590; }
.tw { width: 18px; height: 9px; display: flex; justify-content: center; margin-right: 1px; }
.tx { flex: 1; margin-left: 4px; white-space: nowrap; }
.l1 { padding-left: 18px; }
.l2 { padding-left: 36px; }
.l3 { padding-left: 54px; }
.l4 { padding-left: 72px; }
.fold { display: flex; align-items: center; height: 24px; border-top: 3px solid #1c202e; background: linear-gradient(#e8e8e8, #c9c9c9); font-size: 14px; font-weight: 500; text-align: left; overflow: hidden; }
.fold-ar { display: flex; align-items: center; width: 20px; height: 21px; padding-left: 4px; margin-right: 5px; border-right: 1px solid #888; }

/* scroll bars */
.sb { display: flex; flex-direction: column; flex: none; background: #c3c3c3; color: #444; }
.sb-tree { width: 18px; }
.sb-canvas { width: 14px; }
.sb-form { width: 15px; padding: 3px 0 16px; }
.sbb { display: flex; align-items: center; justify-content: center; height: 18px; border: 1px solid #888; background: linear-gradient(#fafafa, #dcdcdc); }
.track { flex: 1; display: flex; flex-direction: column; padding-top: 1px; min-width: 0; min-height: 0; }
.thumb { display: flex; align-items: center; justify-content: center; border: 1px solid #888; background: linear-gradient(90deg, #fafafa, #d2d2d2); }
.sb-tree .thumb { height: 43%; }
.sb-canvas .thumb { height: 76%; }
.sb-form .thumb { height: 77%; }
.grip { width: 8px; height: 8px; background: repeating-linear-gradient(#555 0 1px, transparent 1px 2px); }
.sb-h { flex-direction: row; height: 16px; }
.sb-h .sbb { width: 18px; height: 16px; }
.sb-h .track { flex-direction: row; padding: 0 0 0 2px; }
.sb-h .thumb { width: 98%; background: linear-gradient(#fafafa, #d2d2d2); }
.sb-h .grip { background: repeating-linear-gradient(90deg, #555 0 1px, transparent 1px 2px); }

/* work area */
.work { display: flex; flex-direction: column; min-width: 0; min-height: 0; }
.crumbs { display: flex; align-items: center; flex: none; height: 25px; padding: 0 2px 0 5px; background: #b1b1b1; border-top: 1px solid #1a1426; color: #fff; font-size: 14px; font-weight: 500; }
.crumb-list { display: flex; align-items: center; gap: 8px; flex: 1; white-space: nowrap; }
.wins { display: flex; gap: 6px; }
.tools { display: flex; align-items: center; gap: 7px; flex: none; height: 27px; padding-left: 6px; background: #e9e9e9; overflow: hidden; }
.combo { display: flex; flex: none; height: 18px; border: 1px solid #8a8a8a; background: #fff; }
.cin { flex: 1; min-width: 0; width: 0; padding-left: 3px; }
.cbtn { display: flex; align-items: center; justify-content: center; width: 16px; border-left: 1px solid #8a8a8a; background: linear-gradient(#f6f6f6, #cfcfcf); }
.cbtn-grey { color: #777; }
.font-combo { width: 111px; background: #e4e4e4; }
.size-combo { width: 38px; margin-left: 2px; margin-right: 1px; background: #e4e4e4; }
.lt { width: 17px; font-size: 14px; font-weight: 500; color: #444; text-align: center; }
.lt i { font-family: "Liberation Serif", serif; font-size: 16px; }
.tool { display: flex; align-items: center; gap: 3px; width: 28px; color: #777; }
.tool.on { color: #000; }
.dl { width: 9px; height: 16px; }
.sep { flex: none; width: 1px; height: 22px; margin-left: -3px; border-left: 1px dotted #888; }

.editor { display: flex; flex: 1; min-height: 0; background: #d9d9d9; }
.canvas { flex: 1; min-width: 0; overflow: hidden; padding: 2px 0 0 2px; }
.device { width: 650px; min-height: 100%; padding: 0 30px; background: #707070; border: 1px solid #777; border-width: 1px 1px 0; border-radius: 6px 6px 0 0; }
.frame { padding: 0 12px 18px; background: #708799; }
.panel { display: grid; grid-template: 70px 272px 47px / 480px 43px; padding-left: 42px; background: #000; }
.brand { grid-column: 1 / 3; display: flex; justify-content: space-between; align-items: flex-start; padding: 13px 39px 0 0; }
.logo { width: 129px; height: 34px; background: #008080; color: #fff; font-weight: 800; font-size: 26px; line-height: 34px; text-align: center; }
.model { font: 300 31px/34px Roboto, sans-serif; color: #fff; }
.screen { padding: 3px; background: repeating-linear-gradient(135deg, #999 0 1px, #fff 1px 3px); }
.grid { display: flex; align-items: flex-end; justify-content: center; height: 100%; background: conic-gradient(from 90deg at 7px 7px, #000 25%, #fff 0) -2px -2px / 8px 8px; }
.slide { display: flex; align-items: center; justify-content: center; width: 160px; height: 56px; background: rgba(0, 0, 0, .2); }
.bars { width: 51px; height: 9px; background: repeating-linear-gradient(#444 0 1px, transparent 1px 4px); }
.touch { height: 140px; padding-top: 5px; background: #708799; color: #000; writing-mode: vertical-rl; font: 46px/43px "Liberation Sans Narrow", "Roboto Condensed", "DejaVu Sans Condensed", sans-serif; -webkit-text-stroke: 1px #000; }

.zoombar { display: flex; align-items: center; justify-content: flex-end; gap: 18px; flex: none; height: 19px; background: #dcdcdc; }
.zoom-combo { width: 156px; }
.view { margin-left: -3px; }

/* inspector */
.insp { display: flex; flex-direction: column; flex: none; height: 247px; border-top: 3px solid #1c202e; background: #e9e9e9; }
.insp-head { display: flex; align-items: flex-end; flex: none; height: 24px; padding-left: 5px; background: #b1b1b1; }
.insp-head .title { align-self: center; font-weight: 600; }
.htab { display: flex; align-items: center; gap: 2px; height: 21px; padding: 0 3px; margin-right: 2px; border: 1px solid #777; border-bottom: 0; background: linear-gradient(#e0e0e0, #cacaca); font-size: 13px; font-weight: 600; color: #666; width: 122px; }
.htab.on { width: 125px; background: linear-gradient(#fafafa, #eee); border-color: #eee; color: #111; }
.htab:nth-of-type(2) { width: 131px; }
.insp-wins { display: flex; align-self: center; gap: 6px; margin-left: 18px; padding-right: 2px; }
.ptabs { gap: 2px; }
.tab-on { background: linear-gradient(#fafafa, #e9e9e9); border-bottom-color: #e9e9e9; color: #111; }
.insp-body { display: flex; flex: 1; min-height: 0; }
.plist { width: 173px; flex: none; padding-left: 3px; background: #efefef; overflow: hidden; }
.plist-head { display: flex; align-items: center; gap: 6px; width: 100%; height: 34px; padding-left: 4px; background: #e9e9e9; }
.plist-items { height: 100%; background: repeating-linear-gradient(transparent 0 18px, #e6e6e6 18px 19px); }
.plist-items li { height: 19px; padding-left: 15px; }
.plist-items a { display: inline-block; padding: 0 2px; }
.cur { background: #c0cad8; }
.split { display: flex; flex-direction: column; align-items: stretch; justify-content: center; gap: 11px; flex: none; width: 8px; margin-top: 3px; border: 1px solid #888; border-bottom: 0; background: #d4d4d4; }
.sp { display: flex; align-items: center; height: 24px; background: linear-gradient(#aaa, #eee); border-bottom: 1px solid #888; }
.form-col { display: flex; flex-direction: column; flex: 1; min-width: 0; }
.form-view { flex: 1; min-height: 0; overflow: hidden; padding: 12px 0 0 12px; }
.sec { display: flex; align-items: flex-end; gap: 6px; font-size: 13px; font-weight: 400; line-height: 18px; }
.sec::after { content: ""; flex: 1; margin-bottom: 2px; border-bottom: 1px solid #000; }
.cards { display: flex; gap: 6px; margin-top: 9px; }
.card { height: 180px; padding: 3px 0 0 14px; border: 1px solid #aaa; background: #cacaca; }
.pattern { width: 384px; flex: none; }
.tip { flex: 1; min-width: 0; border-right: 0; padding-right: 1px; }
.card-t { display: block; font-size: 13px; font-weight: 600; line-height: 18px; }
.f { display: grid; grid-template-columns: 123px 216px; column-gap: 6px; height: 24px; align-items: center; }
.card-t + .f { margin-top: 5px; }
.f label { text-align: right; white-space: nowrap; }
.in { height: 18px; padding-left: 3px; border: 1px solid #8a8a8a; background: #fff; }
.wide { width: 216px; }
.color { width: 126px; }
.sw { width: 21px; border: 1px solid #000; }
.sw-k { background: #000; }
.num { width: 66px; }
.spin { background: linear-gradient(90deg, #999, #ddd); }
.tipbox { display: flex; height: 180px; margin: 14px 0 0 3px; border: 1px solid #8a8a8a; background: #fff; }
.ta { flex: 1; min-width: 0; resize: none; }
.tipbar { width: 18px; background: #c3c3c3; color: #888; }
.tipbar .sbb { width: 18px; }
```
